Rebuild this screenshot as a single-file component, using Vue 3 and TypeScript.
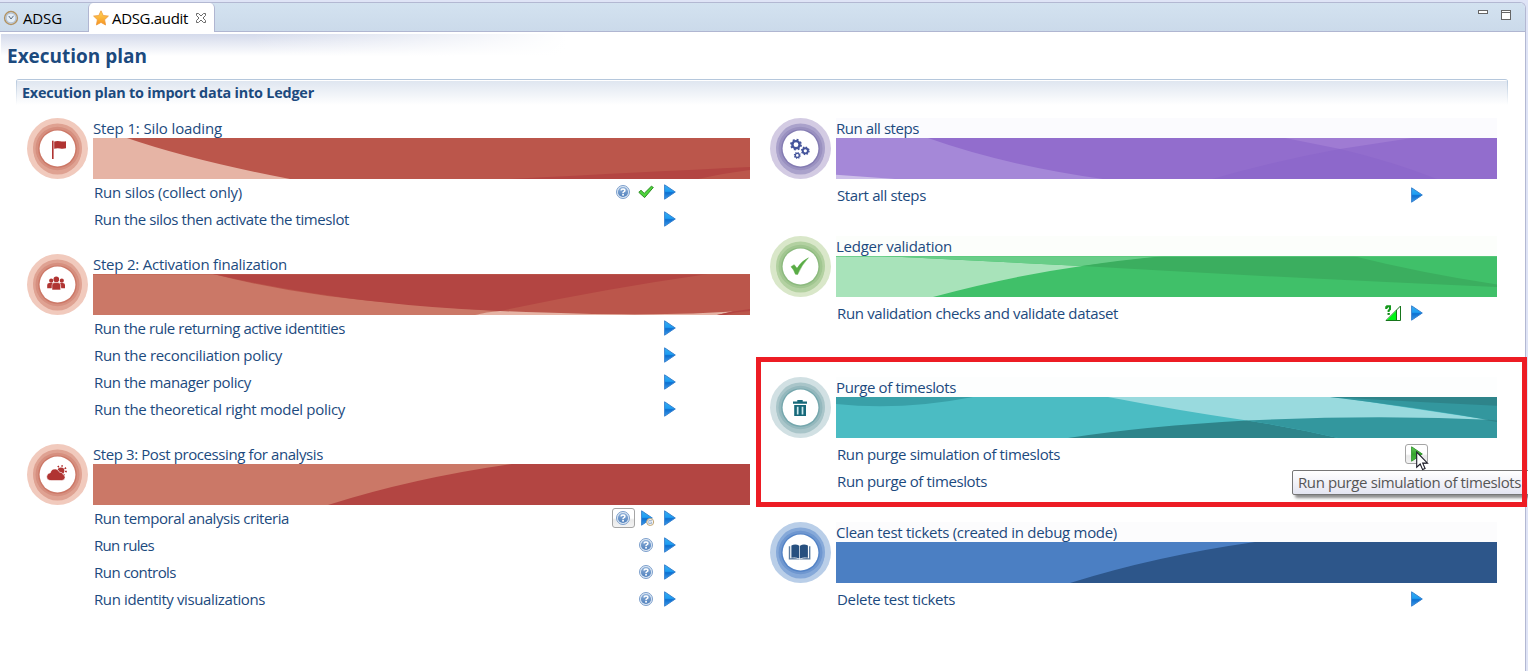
<script setup lang="ts">
import type { Directive } from 'vue'

type Tool = 'help' | 'check' | 'play' | 'playTimer' | 'validate' | 'playGreen' | 'none'
interface Action { label: string; w: number; tools: Tool[]; framed?: Tool }
interface Shape { d: string; fill: string }
interface Step {
  id: string
  title: string
  w: number
  rings: string[]
  ink: string
  base: string
  shapes: Shape[]
  actions: Action[]
  tint?: string
}

// Spreads a label over its design width through letter spacing.
const vFit: Directive<HTMLElement, number> = {
  mounted(el, binding) {
    const n = (el.textContent ?? '').length
    el.style.letterSpacing = ((binding.value - el.getBoundingClientRect().width) / n).toFixed(4) + 'px'
  },
}

const red = ['#f1cabd', '#dfa292', '#d68f7f', '#cc7867']
const left: Step[] = [
  {
    id: 'flag', title: 'Step 1: Silo loading', w: 129, rings: red, ink: '#b03432', base: '#bb564b',
    shapes: [
      { d: 'M0 0H34Q98 22 197 41H0Z', fill: '#e6b4a5' },
      { d: 'M417 41Q550 34 657 29V32Q632 35 605 41Z', fill: '#b34542' },
    ],
    actions: [
      { label: 'Run silos (collect only)', w: 148, tools: ['help', 'check', 'play'] },
      { label: 'Run the silos then activate the timeslot', w: 255, tools: ['play'] },
    ],
  },
  {
    id: 'people', title: 'Step 2: Activation finalization', w: 194, rings: red, ink: '#b03432', base: '#bb564b',
    shapes: [
      { d: 'M0 0H120Q205 22 307 29.5Q360 34 407 37L382 41H0Z', fill: '#cb7867' },
      { d: 'M120 0H615Q510 15 407 37Q255 31 120 0Z', fill: '#b34542' },
      { d: 'M382 41Q393 38 407 37Q500 41 560 40.3Q600 40 640 37.5L624 41Z', fill: '#e6b4a5' },
      { d: 'M624 41Q640 37 657 35V37Q640 38 632 41Z', fill: '#b34542' },
      { d: 'M0 0H657V0.6H0Z', fill: '#c0614f' },
    ],
    actions: [
      { label: 'Run the rule returning active identities', w: 251, tools: ['play'] },
      { label: 'Run the reconciliation policy', w: 188, tools: ['play'] },
      { label: 'Run the manager policy', w: 157, tools: ['play'] },
      { label: 'Run the theoretical right model policy', w: 251, tools: ['play'] },
    ],
  },
  {
    id: 'cloud', title: 'Step 3: Post processing for analysis', w: 230, rings: red, ink: '#b03432', base: '#cb7867',
    shapes: [{ d: 'M235 41Q320 14 419 0H657V41Z', fill: '#b34542' }],
    actions: [
      { label: 'Run temporal analysis criteria', w: 195, tools: ['help', 'playTimer', 'play'], framed: 'help' },
      { label: 'Run rules', w: 60, tools: ['help', 'play'] },
      { label: 'Run controls', w: 82, tools: ['help', 'play'] },
      { label: 'Run identity visualizations', w: 171, tools: ['help', 'play'] },
    ],
  },
]

const right: Step[] = [
  {
    id: 'gears', title: 'Run all steps', w: 83, rings: ['#d3cbe3', '#aaa2cb', '#9a91c0', '#847cb2'], ink: '#44549b', base: '#926dcd', tint: '#fbfbfe',
    shapes: [
      { d: 'M0 0H92Q168 27 267 41H0Z', fill: '#a588d8' },
      { d: 'M0 36.7L59 41H0Z', fill: '#cdbfe9' },
      { d: 'M449 0H576L504 11Z', fill: '#9f7bd3' },
      { d: 'M504 11Q555 23 601 41H376Q438 23 504 11Z', fill: '#8d68cb' },
    ],
    actions: [{ label: 'Start all steps', w: 89, tools: ['play'] }],
  },
  {
    id: 'tick', title: 'Ledger validation', w: 116, rings: ['#d9e7c9', '#b3d1a1', '#a1c690', '#8cba7e'], ink: '#5aac46', base: '#40c069', tint: '#fcfefb',
    shapes: [
      { d: 'M0 0H46L246 10Q175 20 97 41H0Z', fill: '#a8e3ba' },
      { d: 'M46 0H329L246 10Z', fill: '#68cd88' },
      { d: 'M246 10Q285 4 329 0H517Q585 17 661 28.5V31Q470 23 246 10Z', fill: '#3bae5f' },
      { d: 'M0 0H661V0.7H0Z', fill: '#5cca7e' },
    ],
    actions: [{ label: 'Run validation checks and validate dataset', w: 281, tools: ['validate', 'play'] }],
  },
  {
    id: 'trash', title: 'Purge of timeslots', w: 120, rings: ['#d1e0e3', '#a9c5c9', '#94b8bd', '#75a7ad'], ink: '#17697a', base: '#4bbcc3', tint: '#fdfefe',
    shapes: [
      { d: 'M0 0H137Q65 14 0 7Z', fill: '#39a0a8' },
      { d: 'M272 0H500L661 24V30L411 23.5Q345 14 272 0Z', fill: '#99dade' },
      { d: 'M494 0H661V24.5Q580 10 494 0Z', fill: '#33979e' },
      { d: 'M494 0H661V8.7Q580 5 494 0Z', fill: '#2e848a' },
      { d: 'M232 41Q310 29 411 23.5Q455 30 502 41Z', fill: '#2e848a' },
      { d: 'M411 23.5Q540 17.5 661 23V41H502Q455 30 411 23.5Z', fill: '#33979e' },
      { d: 'M645 22.3L661 23.5V25Z', fill: '#2e848a' },
    ],
    actions: [
      { label: 'Run purge simulation of timeslots', w: 223, tools: ['playGreen'], framed: 'playGreen' },
      { label: 'Run purge of timeslots', w: 150, tools: ['none'] },
    ],
  },
  {
    id: 'book', title: 'Clean test tickets (created in debug mode)', w: 281, rings: ['#b9cee8', '#86a9d9', '#6f97d0', '#5383c6'], ink: '#27507f', base: '#4b7fc3', tint: '#fcfcfd',
    shapes: [{ d: 'M234 41Q320 14 419 0H661V41Z', fill: '#2d568a' }],
    actions: [{ label: 'Delete test tickets', w: 118, tools: ['play'] }],
  },
]

const columns = [
  { side: 'left', width: 657, steps: left },
  { side: 'right', width: 661, steps: right },
]
</script>

<template>
  <div class="window">
    <svg class="defs" width="0" height="0">
      <defs>
        <linearGradient id="gBlue" x1="0" y1="0" x2="0" y2="1">
          <stop offset="0" stop-color="#37aef0" /><stop offset=".45" stop-color="#1d9df2" />
          <stop offset=".55" stop-color="#0d6fd0" /><stop offset="1" stop-color="#3a9bea" />
        </linearGradient>
        <linearGradient id="gGreen" x1="0" y1="0" x2="0" y2="1">
          <stop offset="0" stop-color="#66c85a" /><stop offset=".5" stop-color="#35a52c" /><stop offset="1" stop-color="#4cb844" />
        </linearGradient>
        <linearGradient id="gStar" x1="0" y1="0" x2="0" y2="1">
          <stop offset="0" stop-color="#ffd75a" /><stop offset="1" stop-color="#f7931e" />
        </linearGradient>
        <linearGradient id="gHelp" x1="0" y1="0" x2="0" y2="1">
          <stop offset="0" stop-color="#8fb0d8" /><stop offset="1" stop-color="#4f80bd" />
        </linearGradient>
      </defs>
    </svg>
    <div class="frame">
      <header class="tabs">
        <div class="tab idle">
          <svg class="clock" width="16" height="16" viewBox="0 0 16 16">
            <circle cx="8" cy="8" r="6.4" fill="#eef4fa" stroke="#b09263" stroke-width="1.5" />
            <circle cx="8" cy="8" r="5" fill="#e3edf7" stroke="#8fa6c0" stroke-width=".8" />
            <path d="M5.8 6L8 9L10.5 5.8" fill="none" stroke="#5d6d80" stroke-width="1" />
          </svg>
          <span v-fit="39" class="tab-text">ADSG</span>
        </div>
        <div class="tab active">
          <svg class="star" width="16" height="16" viewBox="0 0 16 16">
            <path d="M8 .8L10.2 5.5L15.4 6.1L11.6 9.7L12.6 15L8 12.4L3.4 15L4.4 9.7L.6 6.1L5.8 5.5Z" fill="url(#gStar)" stroke="#ee9b3c" stroke-width=".8" />
          </svg>
          <span v-fit="76" class="tab-text">ADSG.audit</span>
          <svg class="close" width="12" height="12" viewBox="0 0 12 12">
            <path d="M1.5 1.5H3.5L6 4L8.5 1.5H10.5V3.5L8 6L10.5 8.5V10.5H8.5L6 8L3.5 10.5H1.5V8.5L4 6L1.5 3.5Z" fill="#fff" stroke="#6a6a6a" stroke-width="1" />
          </svg>
        </div>
        <div class="spacer"></div>
        <svg class="controls" width="34" height="12" viewBox="0 0 34 12" shape-rendering="crispEdges">
          <rect x=".5" y=".5" width="9" height="3" fill="#fff" stroke="#666" />
          <rect x="23.5" y=".5" width="9" height="9" fill="#fff" stroke="#666" />
          <path d="M23 2.5H33" stroke="#666" />
        </svg>
      </header>

      <main class="body">
        <div class="heading"><h1 v-fit="140">Execution plan</h1></div>
        <div class="section"><h2 v-fit="292">Execution plan to import data into Ledger</h2></div>

        <div class="columns">
          <div v-for="col in columns" :key="col.side" class="column" :class="col.side">
            <section v-for="s in col.steps" :key="s.id" class="step" :class="s.id">
              <svg class="badge" width="61" height="61" viewBox="0 0 61 61">
                <circle cx="30.5" cy="30.5" r="30.5" :fill="s.rings[0]" />
                <circle cx="30.5" cy="30" r="24.5" :fill="s.rings[1]" />
                <ellipse cx="30.5" cy="32" rx="24" ry="24.5" :fill="s.rings[1]" />
                <ellipse cx="30.5" cy="30.5" rx="22" ry="21.7" :fill="s.rings[2]" />
                <circle cx="30.5" cy="30.7" r="19.3" :fill="s.rings[3]" />
                <circle cx="30.5" cy="30.5" r="17.9" fill="#fff" />
                <g v-if="s.id === 'flag'" :fill="s.ink">
                  <rect x="25" y="22.7" width="1.6" height="18.3" />
                  <path d="M27.2 23.4Q30 22.6 33 23.2Q36 23.8 39 23.3V30.3Q36 31 33 30.4Q30 29.8 27.2 30.7Z" />
                </g>
                <g v-else-if="s.id === 'people'" :fill="s.ink">
                  <circle cx="24.2" cy="26.7" r="2.1" /><circle cx="34.8" cy="26.7" r="2.1" />
                  <path d="M20.2 34.3V31Q20.2 29 22.4 29H26L24.8 34.3ZM38 34.3V31Q38 29 35.8 29H33L34.3 34.3Z" />
                  <circle cx="29.3" cy="25.4" r="2.8" />
                  <path d="M25 35.9V31.2Q25 28.6 27.6 28.6H31Q33.6 28.6 33.6 31.2V35.9Z" stroke="#fff" stroke-width=".5" />
                </g>
                <g v-else-if="s.id === 'cloud'" :fill="s.ink">
                  <circle cx="34" cy="26.8" r="3.4" />
                  <circle cx="34" cy="26.8" r="5" fill="none" :stroke="s.ink" stroke-width="1.8" stroke-dasharray="1.4 2.5" />
                  <path d="M24 36.6Q19.6 36.4 19.7 32.5Q20 29.2 23.3 28.8Q24.3 24.7 28.3 25Q31.5 25.2 32.6 28.3Q35.2 27.7 36 30.4Q38.2 31 38.1 33.6Q37.7 36.4 34.8 36.6Z" stroke="#fff" stroke-width=".6" />
                </g>
                <g v-else-if="s.id === 'gears'" fill="none" :stroke="s.ink">
                  <circle cx="26" cy="26.7" r="3.6" stroke-width="2.4" />
                  <circle cx="26" cy="26.7" r="5" stroke-width="1.8" stroke-dasharray="1.95 1.977" />
                  <circle cx="35.3" cy="32.8" r="2.6" stroke-width="1.9" />
                  <circle cx="35.3" cy="32.8" r="3.7" stroke-width="1.4" stroke-dasharray="1.45 1.456" />
                  <circle cx="27.3" cy="37.4" r="2" stroke-width="1.4" />
                  <circle cx="27.3" cy="37.4" r="2.9" stroke-width="1.2" stroke-dasharray="1.1 1.177" />
                </g>
                <path v-else-if="s.id === 'tick'" :fill="s.ink" d="M21 30.7L24.2 28.7L27 32.3Q31 25.5 38.4 21.8Q31.7 28.8 27.6 38.5L25.4 38.2Q24 33.6 21 30.7Z" :stroke="s.ink" stroke-width=".5" />
                <g v-else-if="s.id === 'trash'" :fill="s.ink">
                  <path d="M23 24.4H27.3V23H32.7V24.4H37V26.7H23Z" />
                  <path d="M24.2 28H36V39H24.2Z" />
                  <path d="M27.7 29.7V37.4M32.5 29.7V37.4" stroke="#cdeaee" stroke-width="1.7" />
                </g>
                <g v-else :fill="s.ink">
                  <path d="M21.4 23.5Q25.5 21.6 29.3 23.7V36.6Q25.5 34.7 21.4 35.8Z" />
                  <path d="M37.9 23.5Q33.8 21.6 30 23.7V36.6Q33.8 34.7 37.9 35.8Z" />
                  <path d="M18.8 24.3H20.2V36.2Q25 35.8 29.6 37.2Q34.3 35.8 39 36.2V24.3H40.4V37.6H18.8Z" fill-opacity=".75" />
                </g>
              </svg>

              <div class="content">
                <div class="title" :style="{ background: s.tint }"><span v-fit="s.w" class="fit">{{ s.title }}</span></div>
                <svg class="banner" :width="col.width" height="41" :viewBox="`0 0 ${col.width} 41`">
                  <rect :width="col.width" height="41" :fill="s.base" />
                  <path v-for="(p, i) in s.shapes" :key="i" :d="p.d" :fill="p.fill" />
                </svg>
                <div class="actions">
                  <div v-for="a in s.actions" :key="a.label" class="action">
                    <span v-fit="a.w" class="fit">{{ a.label }}</span>
                    <div class="tools">
                      <span v-for="t in a.tools" :key="t" class="tool" :class="[t, { framed: a.framed === t }]">
                        <svg v-if="t === 'play'" width="16" height="16" viewBox="0 0 16 16">
                          <path d="M2.6 .8V15.2L13.3 8Z" fill="url(#gBlue)" stroke="#3a83cf" stroke-width="1" />
                        </svg>
                        <svg v-else-if="t === 'playGreen'" width="16" height="16" viewBox="0 0 16 16">
                          <path d="M2.6 .8V15.2L13.3 8Z" fill="url(#gGreen)" stroke="#3a9a34" stroke-width="1" />
                        </svg>
                        <svg v-else-if="t === 'playTimer'" width="16" height="16" viewBox="0 0 16 16">
                          <path d="M2.6 .8V15.2L13.3 8Z" fill="url(#gBlue)" stroke="#3a83cf" stroke-width="1" />
                          <circle cx="11.2" cy="12" r="3.5" fill="#f3f6fa" stroke="#c2a674" stroke-width="1" />
                          <path d="M12.9 10.5H9.8V13.5H12.6V12H11.3" fill="none" stroke="#94a9c6" stroke-width=".8" />
                        </svg>
                        <svg v-else-if="t === 'help'" width="16" height="16" viewBox="0 0 16 16">
                          <circle cx="8" cy="8" r="6.5" fill="#dfe9f5" stroke="#7c9fcc" stroke-width="1" />
                          <circle cx="8" cy="8" r="5.1" fill="url(#gHelp)" />
                          <path d="M6.1 6.6Q6.1 4.9 8 4.9Q9.9 4.9 9.9 6.4Q9.9 7.4 8.7 7.9Q8 8.2 8 9.2" fill="none" stroke="#fff" stroke-width="1.5" />
                          <rect x="7.2" y="10" width="1.7" height="1.6" fill="#fff" />
                        </svg>
                        <svg v-else-if="t === 'check'" width="16" height="16" viewBox="0 0 16 16">
                          <path d="M.8 8.3L3 6.3L6.2 9.4L13.3 2.3L15.3 3.4L6.6 13.6Z" fill="#4fd53c" stroke="#2b8c22" stroke-width="1" stroke-linejoin="round" />
                        </svg>
                        <svg v-else-if="t === 'validate'" width="16" height="16" viewBox="0 0 16 16">
                          <path d="M1 15.5L15.5 1V15.5Z" fill="#fff" stroke="#17751c" stroke-width="1" />
                          <path d="M2 15L11.5 5.5V15Z" fill="#00f516" />
                          <path d="M11.5 5V15.5" stroke="#17751c" />
                          <path d="M1.2 4V2.2H2.2V1.2H5V4.3L3.6 5.6V7" fill="none" stroke="#14981c" stroke-width="2" />
                          <rect x="2.5" y="8" width="2.3" height="1.9" fill="#14821a" />
                        </svg>
                      </span>
                    </div>
                  </div>
                </div>
              </div>

              <template v-if="s.id === 'trash'">
                <div class="tooltip"><span v-fit="223" class="fit">Run purge simulation of timeslots</span></div>
                <svg class="cursor" width="13" height="20" viewBox="0 0 13 20">
                  <path d="M.7 1V16.2L4.2 13L6.6 18.6L9.1 17.5L6.7 12.1H11.5Z" fill="#fff" stroke="#1c1c28" stroke-width="1.1" />
                </svg>
                <div class="highlight"></div>
              </template>
            </section>
          </div>
        </div>
      </main>
    </div>
  </div>
</template>

<style>
html, body { margin: 0; background: #fff; }
</style>

<style scoped>
.window {
  box-sizing: border-box;
  width: 1528px;
  height: 671px;
  padding: 2px 2px 0 0;
  overflow: hidden;
  position: relative;
  background: #dfe4f6;
  color: #1c4a7e;
  font: 15px/20px "Open Sans", "Noto Sans", sans-serif;
}
.defs { position: absolute; }
.frame {
  box-sizing: border-box;
  height: 669px;
  border-top: 1px solid #b3b8d2;
  border-right: 1px solid #b3b8d2;
  border-radius: 0 6px 0 0;
  background: #fff;
}
.tabs {
  box-sizing: border-box;
  display: flex;
  height: 29px;
  border-bottom: 1px solid #b0b6d1;
  border-radius: 0 5px 0 0;
  background: linear-gradient(#d3e2f0, #cbdaea);
}
.tab { display: flex; align-items: center; box-sizing: border-box; color: #000; }
.idle { width: 88px; padding-left: 3px; height: 28px; padding-top: 2px; }
.active {
  width: 127px;
  height: 29px;
  padding: 1px 0 0 4px;
  border: solid #b0b6d1;
  border-width: 0 1px;
  border-radius: 5px 5px 0 0;
  background: #fff;
}
.tab-text { display: inline-block; white-space: nowrap; margin: 0 0 1px 4px; }
.active .tab-text { margin-left: 3px; }
.close { margin: 0 0 1px 7px; }
.spacer { flex: 1; }
.controls { margin: 7px 13px 0 0; }
.body { padding: 2px 0 0 1px; }
.heading {
  box-sizing: border-box;
  height: 45px;
  padding: 9px 0 0 6px;
  background:
    linear-gradient(90deg, transparent 250px, #fff 565px),
    linear-gradient(#d4daeb, #fff 22px);
}
h1, h2 { display: inline-block; margin: 0; white-space: nowrap; color: #1c4a7e; font-weight: 700; }
h1 { font-size: 19px; line-height: 26px; }
h2 { font-size: 14.4px; line-height: 20px; }
.section {
  box-sizing: border-box;
  width: 1492px;
  height: 26px;
  margin-left: 15px;
  padding: 2px 0 0 6px;
  border-top: 1px solid #b5c7dc;
  border-radius: 3px 3px 0 0;
  background:
    linear-gradient(#b5c7dc, #fff) 0 0 / 1px 100% no-repeat,
    linear-gradient(#b5c7dc, #fff) 100% 0 / 1px 100% no-repeat,
    linear-gradient(#fff 1px, #dfe6f0 1px, #fff);
}
.columns { display: flex; gap: 20px; padding: 13px 0 0 26px; }
.column { display: flex; flex-direction: column; }
.left { gap: 21px; }
.right { gap: 27px; }
.step { display: flex; gap: 5px; position: relative; }
.trash { margin-top: 23px; }
.badge { flex: none; }
.title { height: 20px; line-height: 20px; }
.fit { display: inline-block; white-space: nowrap; }
.banner { display: block; }
.right .actions { padding-top: 3px; }
.action {
  box-sizing: border-box;
  display: flex;
  justify-content: space-between;
  align-items: center;
  height: 27px;
  padding: 0 69px 2px 1px;
}
.tools { display: flex; }
.tool {
  box-sizing: border-box;
  display: flex;
  align-items: center;
  justify-content: center;
  width: 23px;
  height: 20px;
  border: 1px solid transparent;
  border-radius: 3px;
}
.help, .check, .validate { padding-right: 2px; }
.framed { border-color: #a5a5a5; background: linear-gradient(#fff 50%, #e9e9e9 60%, #f3f3f3); }
.tooltip {
  box-sizing: border-box;
  position: absolute;
  left: 522px;
  top: 93px;
  width: 238px;
  height: 25px;
  padding: 1px 0 0 5px;
  border: 1px solid #767676;
  border-radius: 2px;
  background: linear-gradient(#fff, #e4e5f1);
  box-shadow: 3px 3px 3px rgba(0, 0, 0, .45);
  color: #565656;
}
.cursor { position: absolute; left: 646px; top: 74px; }
.highlight {
  box-sizing: border-box;
  position: absolute;
  left: -14px;
  top: -20px;
  width: 771px;
  height: 150px;
  border: 5px solid #ed1c24;
}
</style>
